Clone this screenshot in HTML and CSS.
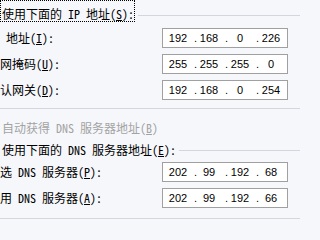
FILE: index.html
```html
<!DOCTYPE html>
<html lang="zh-CN">
<head>
<meta charset="utf-8">
<title>Internet 协议 (TCP/IP) 属性</title>
<link rel="stylesheet" href="styles.css">
</head>
<body>
<div class="page">
  <div class="legend">
    <span class="legend-text focus">使用下面的 IP 地址(<u>S</u>):</span>
    <span class="rule rule-top"></span>
  </div>
  <div class="fields fields-ip">
    <div class="row">
      <span class="label indent">地址(<u>I</u>):</span>
      <div class="ip"><span class="oct">192</span><span class="dot">.</span><span class="oct">168</span><span class="dot">.</span><span class="oct">0</span><span class="dot">.</span><span class="oct">226</span></div>
    </div>
    <div class="row">
      <span class="label">网掩码(<u>U</u>):</span>
      <div class="ip"><span class="oct">255</span><span class="dot">.</span><span class="oct">255</span><span class="dot">.</span><span class="oct">255</span><span class="dot">.</span><span class="oct">0</span></div>
    </div>
    <div class="row">
      <span class="label">认网关(<u>D</u>):</span>
      <div class="ip"><span class="oct">192</span><span class="dot">.</span><span class="oct">168</span><span class="dot">.</span><span class="oct">0</span><span class="dot">.</span><span class="oct">254</span></div>
    </div>
  </div>
  <div class="sep sep-ip"></div>
  <div class="radio disabled">自动获得 DNS 服务器地址(<u>B</u>)</div>
  <div class="legend legend-dns">
    <span class="legend-text">使用下面的 DNS 服务器地址(<u>E</u>):</span>
    <span class="rule rule-dns"></span>
  </div>
  <div class="fields fields-dns">
    <div class="row">
      <span class="label">选 DNS 服务器(<u>P</u>):</span>
      <div class="ip"><span class="oct">202</span><span class="dot">.</span><span class="oct">99</span><span class="dot">.</span><span class="oct">192</span><span class="dot">.</span><span class="oct">68</span></div>
    </div>
    <div class="row">
      <span class="label">用 DNS 服务器(<u>A</u>):</span>
      <div class="ip"><span class="oct">202</span><span class="dot">.</span><span class="oct">99</span><span class="dot">.</span><span class="oct">192</span><span class="dot">.</span><span class="oct">66</span></div>
    </div>
  </div>
  <div class="sep sep-dns"></div>
</div>
</body>
</html>
```

FILE: styles.css
```css
html, body {
  margin: 0;
  padding: 0;
}

body {
  background: #f6f7fb;
  color: #000;
  font-family: "Noto Sans CJK SC", "Noto Sans CJK JP", sans-serif;
  font-size: 12px;
  line-height: 14px;
  font-feature-settings: "hwid" 1;
}

.page {
  width: 300px;
  height: 233px;
  overflow: hidden;
}

u {
  text-decoration: underline;
  text-underline-offset: 1px;
}

.legend {
  display: flex;
  align-items: flex-start;
}

.legend-text {
  white-space: nowrap;
  height: 14px;
}

.focus {
  border: 1px dotted #000;
  padding: 6px 0 0 1px;
}

.legend-dns {
  margin-top: 8px;
}

.legend-dns .legend-text {
  padding-left: 2px;
}

.rule {
  flex: 1;
  height: 1px;
  background: #d3d6de;
  margin-left: 3px;
}

.rule-top {
  margin-top: 15px;
}

.rule-dns {
  margin-top: 7px;
}

.fields {
  display: grid;
  row-gap: 6px;
}

.fields-ip {
  margin-top: 6px;
}

.fields-dns {
  margin-top: 5px;
}

.row {
  display: grid;
  grid-template-columns: 162px 126px;
  height: 20px;
  align-items: center;
}

.label {
  white-space: nowrap;
}

.indent {
  padding-left: 6px;
}

.ip {
  display: flex;
  height: 18px;
  border: 1px solid #a0a0a0;
  background: #fff;
  padding-left: 3px;
  font-family: "Liberation Sans", Arial, sans-serif;
  font-size: 11px;
  line-height: 18px;
  font-feature-settings: normal;
}

.oct {
  width: 24px;
  text-align: center;
}

.dot {
  width: 7px;
  text-align: right;
}

.sep {
  height: 1px;
  background: #d3d6de;
}

.sep-ip {
  margin-top: 8px;
}

.sep-dns {
  margin-top: 10px;
}

.radio {
  margin-top: 12px;
  padding-left: 2px;
  white-space: nowrap;
}

.disabled {
  color: #a3a3a3;
}
```
